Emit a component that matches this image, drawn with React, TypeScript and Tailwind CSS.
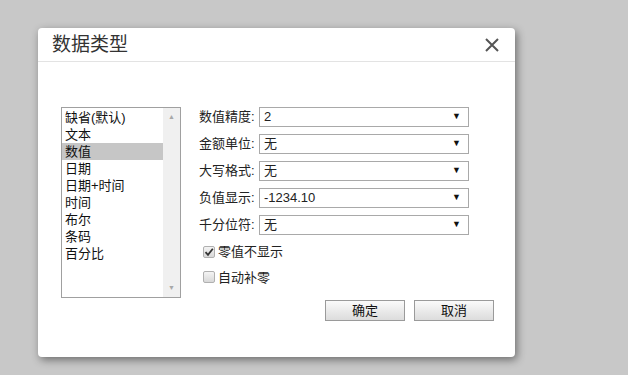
import React from "react"

const font = { fontFamily: '"Liberation Sans", "Noto Sans CJK SC", sans-serif' }

const types = ["缺省(默认)", "文本", "数值", "日期", "日期+时间", "时间", "布尔", "条码", "百分比"]

const fields = [
  { label: "数值精度:", value: "2" },
  { label: "金额单位:", value: "无" },
  { label: "大写格式:", value: "无" },
  { label: "负值显示:", value: "-1234.10" },
  { label: "千分位符:", value: "无" },
]

function Select({ value }: { value: string }) {
  return (
    <div className="flex h-[20px] w-[210px] items-center justify-between border border-[#a9a9a9] bg-white pl-[4px] pr-[7px] text-[13px] text-[#222]">
      <span>{value}</span>
      <span className="text-[9px] text-[#111]">▼</span>
    </div>
  )
}

function Check({ checked, label }: { checked?: boolean; label: string }) {
  return (
    <label className="flex items-center gap-[3px] text-[13px] text-[#222]">
      <span className="flex h-[12px] w-[12px] items-center justify-center rounded-[2px] border border-[#b0b0b0] bg-gradient-to-b from-[#f4f4f4] to-[#d8d8d8]">
        {checked && (
          <svg width="10" height="10" viewBox="0 0 10 10">
            <path d="M1.5 5.2 L4 7.8 L8.8 1.8" fill="none" stroke="#333" strokeWidth="1.8" />
          </svg>
        )}
      </span>
      {label}
    </label>
  )
}

export default function App() {
  return (
    <div className="h-[375px] w-[628px] bg-[#c8c8c8] pl-[38px] pt-[28px]" style={font}>
      <div className="flex h-[329px] w-[477px] flex-col rounded-[4px] bg-white shadow-[2px_3px_8px_rgba(0,0,0,0.45)]">
        <div className="flex h-[34px] items-center justify-between border-b border-[#e3e3e3] pl-[14px] pr-[16px]">
          <span className="pt-[2px] text-[19px] text-[#333]">数据类型</span>
          <svg width="14" height="14" viewBox="0 0 14 14">
            <path d="M1 1 L13 13 M13 1 L1 13" stroke="#555" strokeWidth="2" />
          </svg>
        </div>
        <div className="flex pl-[23px] pr-[21px] pt-[45px]">
          <div className="flex h-[191px] w-[120px] border border-[#a0a0a0]">
            <div className="flex-1 pt-[1px]">
              {types.map((t, i) => (
                <div
                  key={t}
                  className={`h-[17px] pl-[3px] text-[13px] leading-[17px] text-[#111] ${i === 2 ? "bg-[#c6c6c6]" : ""}`}
                >
                  {t}
                </div>
              ))}
            </div>
            <div className="flex w-[17px] flex-col justify-between bg-[#f0f0f0] py-[4px] text-center text-[7px] text-[#a8a8a8]">
              <span>▲</span>
              <span>▼</span>
            </div>
          </div>
          <div className="ml-[18px] flex flex-1 flex-col">
            <div className="flex flex-col gap-[7px]">
              {fields.map((f) => (
                <div key={f.label} className="flex items-center gap-[4px]">
                  <span className="w-[56px] text-[13px] text-[#222]">{f.label}</span>
                  <Select value={f.value} />
                </div>
              ))}
            </div>
            <div className="ml-[4px] mt-[7px] flex flex-col gap-[6px]">
              <Check checked label="零值不显示" />
              <Check label="自动补零" />
            </div>
            <div className="mt-[13px] flex justify-end gap-[9px]">
              {["确定", "取消"].map((b) => (
                <div
                  key={b}
                  className="flex h-[21px] w-[80px] items-center justify-center border border-[#9a9a9a] bg-gradient-to-b from-[#fafafa] to-[#dcdcdc] text-[13px] text-[#111]"
                >
                  {b}
                </div>
              ))}
            </div>
          </div>
        </div>
      </div>
    </div>
  )
}
